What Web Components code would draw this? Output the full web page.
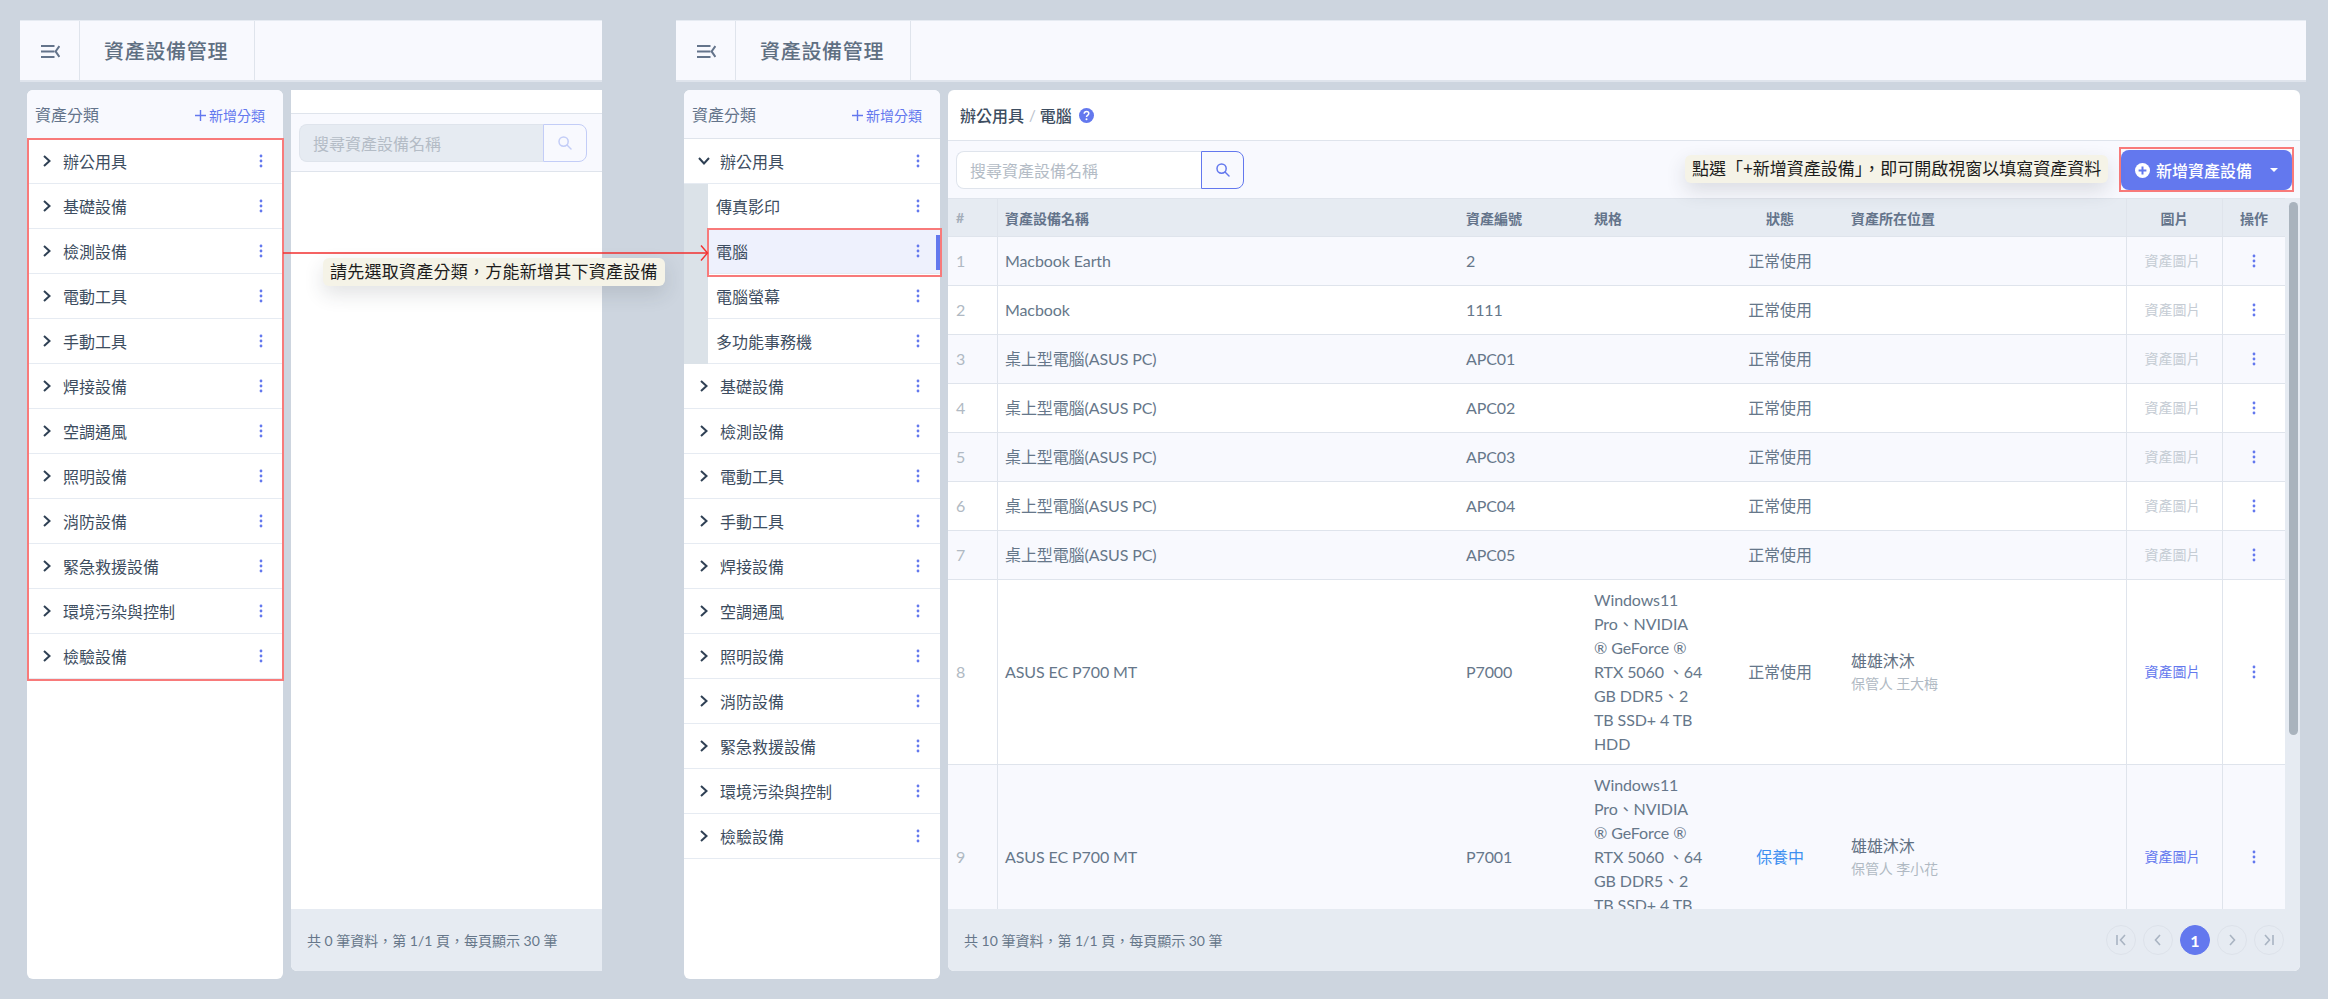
<!DOCTYPE html>
<html lang="zh-Hant">
<head>
<meta charset="utf-8">
<title>資產設備管理</title>
<style>
    html, body { margin: 0; height: 999px; overflow: hidden; background: #cdd5df; font-family: Lato, "Noto Sans CJK TC", sans-serif; }
    body { display: flex; gap: 74px; padding: 20px 0 0 20px; box-sizing: border-box; position: relative; }
</style>
</head>
<body>
    <asset-shell style="width:582px" inset-left="7" inset-right="0">
        <category-sidebar>
            <cat-row>辦公用具</cat-row>
            <cat-row>基礎設備</cat-row>
            <cat-row>檢測設備</cat-row>
            <cat-row>電動工具</cat-row>
            <cat-row>手動工具</cat-row>
            <cat-row>焊接設備</cat-row>
            <cat-row>空調通風</cat-row>
            <cat-row>照明設備</cat-row>
            <cat-row>消防設備</cat-row>
            <cat-row>緊急救援設備</cat-row>
            <cat-row>環境污染與控制</cat-row>
            <cat-row>檢驗設備</cat-row>
        </category-sidebar>
        <asset-panel empty total="0"></asset-panel>
    </asset-shell>

    <asset-shell style="width:1630px" inset-left="8" inset-right="6">
        <category-sidebar>
            <cat-row kind="open">辦公用具</cat-row>
            <cat-children>
                <cat-row kind="child">傳真影印</cat-row>
                <cat-row kind="child" active>電腦</cat-row>
                <cat-row kind="child">電腦螢幕</cat-row>
                <cat-row kind="child">多功能事務機</cat-row>
            </cat-children>
            <cat-row>基礎設備</cat-row>
            <cat-row>檢測設備</cat-row>
            <cat-row>電動工具</cat-row>
            <cat-row>手動工具</cat-row>
            <cat-row>焊接設備</cat-row>
            <cat-row>空調通風</cat-row>
            <cat-row>照明設備</cat-row>
            <cat-row>消防設備</cat-row>
            <cat-row>緊急救援設備</cat-row>
            <cat-row>環境污染與控制</cat-row>
            <cat-row>檢驗設備</cat-row>
        </category-sidebar>
        <asset-panel total="10"></asset-panel>
    </asset-shell>

    <!-- annotations drawn over the screens -->
    <mark-box x="27" y="138" w="257" h="543"></mark-box>
    <mark-box x="707" y="228" w="235" h="49"></mark-box>
    <mark-box x="2119" y="147" w="175" h="45"></mark-box>
    <note-arrow></note-arrow>
    <note-tip x="323" y="258">請先選取資產分類&#xFF0C;方能新增其下資產設備</note-tip>
    <note-tip x="1685" y="155" style="letter-spacing:0">點選「+新增資產設備」&#xFF0C;即可開啟視窗以填寫資產資料</note-tip>

<script>
const PRIMARY = '#6378ee';
const COMMA = '\uFF0C';

const ICONS = {
    search: '<svg width="14" height="14" viewBox="0 0 14 14" fill="none" stroke="currentColor" stroke-width="1.5" stroke-linecap="round"><circle cx="5.6" cy="5.6" r="4.6"/><path d="M9 9l4 4"/></svg>',
    toggle: '<svg width="19" height="14" viewBox="0 0 19 14" fill="none" stroke="#64748b" stroke-width="2"><path d="M0 2h13.5M0 7.4h13.5M0 13h13.5"/><path d="M18.4 2 14.6 7.4l3.8 5.4"/></svg>',
    dots: '<svg width="4" height="14" viewBox="0 0 4 14" fill="#6378ee"><circle cx="2" cy="2" r="1.4"/><circle cx="2" cy="7" r="1.4"/><circle cx="2" cy="12" r="1.4"/></svg>'
};

class AssetShell extends HTMLElement {
    connectedCallback() {
        this.attachShadow({ mode: 'open' });
        const left = this.getAttribute('inset-left');
        const right = this.getAttribute('inset-right');
        this.shadowRoot.innerHTML = `
            <style>
                :host { display: flex; flex-direction: column; flex: none; height: 959px; }
                header { display: flex; flex: none; height: 62px; box-sizing: border-box; background: #f8f9fe; border-top: 1px solid #e6ebf2; border-bottom: 2px solid #dfe4ec; }
                .toggle { width: 60px; box-sizing: border-box; display: flex; align-items: center; justify-content: center; border-right: 1px solid #dfe4ec; padding-left: 1px; }
                h1 { margin: 0; padding: 0 26px 0 24px; display: flex; align-items: center; font-size: 20px; font-weight: 500; letter-spacing: .7px; color: #5f6f82; border-right: 1px solid #dfe4ec; }
                .body { display: flex; flex: 1; gap: 8px; padding: 8px ${right}px 0 ${left}px; min-height: 0; }
            </style>
            <header>
                <div class="toggle">${ICONS.toggle}</div>
                <h1>資產設備管理</h1>
            </header>
            <div class="body"><slot></slot></div>
        `;
    }
}

class CategorySidebar extends HTMLElement {
    connectedCallback() {
        this.attachShadow({ mode: 'open' });
        this.shadowRoot.innerHTML = `
            <style>
                :host { display: flex; flex-direction: column; flex: none; width: 256px; height: 889px; background: #fff; border-radius: 6px; overflow: hidden; }
                .head { flex: none; height: 49px; box-sizing: border-box; display: flex; align-items: center; justify-content: space-between; padding: 2px 18px 0 8px; background: #f8f9fe; border-bottom: 1px solid #dfe4ec; }
                .title { font-size: 16px; color: #64748b; margin-top: -3px; }
                .add { display: flex; align-items: center; gap: 3px; font-size: 14px; color: ${PRIMARY}; }
            </style>
            <div class="head">
                <span class="title">資產分類</span>
                <span class="add"><svg width="11" height="11" viewBox="0 0 11 11" stroke="#6378ee" stroke-width="1.4"><path d="M5.5 0v11M0 5.5h11"/></svg>新增分類</span>
            </div>
            <slot></slot>
        `;
    }
}

class CatChildren extends HTMLElement {
    connectedCallback() {
        this.attachShadow({ mode: 'open' });
        this.shadowRoot.innerHTML = `
            <style>
                :host { display: block; padding-left: 24px; background: #dbe2e8; }
            </style>
            <slot></slot>
        `;
    }
}

class CatRow extends HTMLElement {
    connectedCallback() {
        this.attachShadow({ mode: 'open' });
        const kind = this.getAttribute('kind');
        let arrow = '<svg class="arrow" width="8" height="12" viewBox="0 0 8 12" fill="none" stroke="#2f4054" stroke-width="2"><path d="M1 1l5.5 5L1 11"/></svg>';
        if (kind === 'open') arrow = '<svg class="arrow" width="12" height="8" viewBox="0 0 12 8" fill="none" stroke="#2f4054" stroke-width="2"><path d="M1 1l5 5.5L11 1"/></svg>';
        if (kind === 'child') arrow = '';
        this.shadowRoot.innerHTML = `
            <style>
                :host { display: flex; align-items: center; flex: none; height: 45px; box-sizing: border-box; padding: 0 20px 1px 16px; background: #fff; border-bottom: 1px solid #e6ebf2; font-size: 16px; color: #3d4d60; position: relative; }
                :host([kind="open"]) { padding-left: 14px; }
                :host([kind="child"]) { padding-left: 8px; }
                :host([active]) { background: #eef1fd; }
                :host([active]) .bar { position: absolute; right: 0; top: 6px; width: 4px; height: 35px; background: ${PRIMARY}; }
                .arrow { flex: none; margin-right: 12px; }
                :host([kind="open"]) .arrow { margin-right: 10px; }
                .label { flex: 1; }
            </style>
            ${arrow}
            <span class="label"><slot></slot></span>
            ${ICONS.dots}
            <span class="bar"></span>
        `;
    }
}

class SearchBox extends HTMLElement {
    connectedCallback() {
        this.attachShadow({ mode: 'open' });
        this.shadowRoot.innerHTML = `
            <style>
                :host { display: flex; flex: none; width: 288px; height: 38px; box-sizing: border-box; font-size: 16px; }
                .field { flex: 1; display: flex; align-items: center; padding-left: 13px; background: #fff; border: 1px solid #dfe4ec; border-right: 0; border-radius: 8px 0 0 8px; color: #b4bcc6; }
                .btn { flex: none; width: 43px; box-sizing: border-box; display: flex; align-items: center; justify-content: center; border: 1px solid ${PRIMARY}; border-radius: 0 8px 8px 0; color: ${PRIMARY}; }
                :host([disabled]) .field { background: #e6ebf2; border-color: #dfe4ec; color: #b4bcc6; }
                :host([disabled]) .btn { width: 44px; border-color: #c3cdf7; color: #c3cdf7; }
            </style>
            <div class="field">搜尋資產設備名稱</div>
            <div class="btn">${ICONS.search}</div>
        `;
    }
}

class AddButton extends HTMLElement {
    connectedCallback() {
        this.attachShadow({ mode: 'open' });
        this.shadowRoot.innerHTML = `
            <style>
                :host { display: flex; align-items: center; flex: none; width: 171px; height: 40px; box-sizing: border-box; padding: 0 14px; gap: 6px; background: ${PRIMARY}; border-radius: 8px; color: #fff; font-size: 16px; font-weight: 500; }
                .caret { margin-left: auto; width: 0; height: 0; border: 4px solid transparent; border-top: 4px solid #fff; border-bottom: 0; }
            </style>
            <svg width="15" height="15" viewBox="0 0 15 15"><circle cx="7.5" cy="7.5" r="7.5" fill="#fff"/><path d="M7.5 3.6v7.8M3.6 7.5h7.8" stroke="#6378ee" stroke-width="2"/></svg>
            <span>新增資產設備</span>
            <span class="caret"></span>
        `;
    }
}

const SPEC = 'Windows11<br>Pro、NVIDIA<br>® GeForce ®<br>RTX 5060 、64<br>GB DDR5、2<br>TB SSD+ 4 TB<br>HDD';

const ROWS = [
    { name: 'Macbook Earth', code: '2' },
    { name: 'Macbook', code: '1111' },
    { name: '桌上型電腦(ASUS PC)', code: 'APC01' },
    { name: '桌上型電腦(ASUS PC)', code: 'APC02' },
    { name: '桌上型電腦(ASUS PC)', code: 'APC03' },
    { name: '桌上型電腦(ASUS PC)', code: 'APC04' },
    { name: '桌上型電腦(ASUS PC)', code: 'APC05' },
    { name: 'ASUS EC P700 MT', code: 'P7000', spec: SPEC, place: '雄雄沐沐', keeper: '保管人 王大梅' },
    { name: 'ASUS EC P700 MT', code: 'P7001', spec: SPEC, place: '雄雄沐沐', keeper: '保管人 李小花', status: '保養中' }
];

class AssetTable extends HTMLElement {
    connectedCallback() {
        this.attachShadow({ mode: 'open' });
        const body = ROWS.map((r, i) => `
            <tr>
                <td class="num">${i + 1}</td>
                <td class="split">${r.name}</td>
                <td>${r.code}</td>
                <td class="spec">${r.spec || ''}</td>
                <td class="center ${r.status ? 'busy' : ''}">${r.status || '正常使用'}</td>
                <td>${r.place ? `<div class="place">${r.place}</div><div class="keeper">${r.keeper}</div>` : ''}</td>
                <td class="center split pic ${r.place ? 'link' : ''}">資產圖片</td>
                <td class="center split act">${ICONS.dots}</td>
            </tr>`).join('');
        this.shadowRoot.innerHTML = `
            <style>
                :host { display: flex; flex: 1; min-height: 0; overflow: hidden; background: #e6ebf2; }
                .scroll { flex: 1; min-width: 0; overflow: hidden; background: #fff; }
                table { width: 1337px; table-layout: fixed; border-collapse: separate; border-spacing: 0; font-size: 16px; letter-spacing: -.1px; color: #66778a; }
                th { height: 39px; box-sizing: border-box; background: #e6ebf2; border-top: 1px solid #dfe4ec; border-bottom: 1px solid #dfe4ec; padding: 0 7px; text-align: left; font-size: 14px; font-weight: 700; letter-spacing: 0; color: #64748b; }
                th.num { color: #a3adb9; padding-left: 8px; }
                td { height: 49px; box-sizing: border-box; padding: 8px 7px; line-height: 24px; border-bottom: 1px solid #dfe4ec; vertical-align: middle; }
                tr:nth-child(odd) td { background: #f8f9fe; }
                td.num { color: #b0b9c3; padding-left: 8px; }
                .split { border-left: 1px solid #dfe4ec; }
                .center, th.center { text-align: center; padding-left: 0; padding-right: 0; }
                td.spec { padding-right: 0; }
                td.pic { font-size: 14px; letter-spacing: 0; color: #c5ccd4; padding-right: 4px; }
                td.link { color: ${PRIMARY}; }
                td.act { padding-right: 1px; }
                .busy { color: #3d8ff0; }
                .place { line-height: 22px; color: #5f6f82; margin-top: 1px; }
                .keeper { font-size: 14px; line-height: 24px; color: #b0b9c3; }
                svg { vertical-align: -1px; }
                .gutter { flex: none; width: 15px; padding: 4px 2px 0 4px; box-sizing: border-box; }
                .thumb { width: 9px; height: 533px; border-radius: 5px; background: #a9b3bd; }
            </style>
            <div class="scroll">
                <table>
                    <colgroup>
                        <col style="width:49px"><col style="width:462px"><col style="width:128px"><col style="width:129px">
                        <col style="width:128px"><col style="width:282px"><col style="width:96px"><col style="width:63px">
                    </colgroup>
                    <thead>
                        <tr>
                            <th class="num">#</th>
                            <th class="split">資產設備名稱</th>
                            <th>資產編號</th>
                            <th>規格</th>
                            <th class="center">狀態</th>
                            <th>資產所在位置</th>
                            <th class="center split">圖片</th>
                            <th class="center split">操作</th>
                        </tr>
                    </thead>
                    <tbody>${body}</tbody>
                </table>
            </div>
            <div class="gutter"><div class="thumb"></div></div>
        `;
    }
}

class PagerBar extends HTMLElement {
    connectedCallback() {
        this.attachShadow({ mode: 'open' });
        const total = this.getAttribute('total');
        const chev = (d) => `<svg width="14" height="14" viewBox="0 0 14 14" fill="none" stroke="#a9b4c2" stroke-width="1.6">${d}</svg>`;
        const pages = this.hasAttribute('pages') ? `
            <div class="pages">
                <span>${chev('<path d="M3 2v10M11 2 6.5 7l4.5 5"/>')}</span>
                <span>${chev('<path d="M9 2 4.5 7 9 12"/>')}</span>
                <span class="on">1</span>
                <span>${chev('<path d="M5 2l4.5 5L5 12"/>')}</span>
                <span>${chev('<path d="M3 2l4.5 5L3 12M11 2v10"/>')}</span>
            </div>` : '';
        this.shadowRoot.innerHTML = `
            <style>
                :host { display: flex; align-items: center; justify-content: space-between; flex: none; height: 62px; box-sizing: border-box; padding: 0 16px; background: #e6ebf2; font-size: 14px; color: #66778a; }
                .pages { display: flex; gap: 7px; }
                .pages span { width: 30px; height: 30px; box-sizing: border-box; display: flex; align-items: center; justify-content: center; border: 1px solid #dde2ea; border-radius: 50%; }
                .pages .on { background: ${PRIMARY}; border-color: ${PRIMARY}; color: #fff; font-size: 16px; font-weight: 700; }
            </style>
            <span>共 ${total} 筆資料${COMMA}第 1/1 頁${COMMA}每頁顯示 30 筆</span>
            ${pages}
        `;
    }
}

class AssetPanel extends HTMLElement {
    connectedCallback() {
        this.attachShadow({ mode: 'open' });
        const empty = this.hasAttribute('empty');
        const total = this.getAttribute('total');
        const crumb = empty ? '' : `
            <span class="c1">辦公用具</span><span class="sep">/</span><span class="c1">電腦</span>
            <svg width="15" height="15" viewBox="0 0 15 15"><circle cx="7.5" cy="7.5" r="7.5" fill="#6378ee"/><path d="M5.2 5.7c0-1.3 1-2.2 2.3-2.2s2.3.8 2.3 2c0 1.8-2.3 1.8-2.3 3.4" fill="none" stroke="#fff" stroke-width="1.5"/><circle cx="7.5" cy="11.2" r="1" fill="#fff"/></svg>`;
        this.shadowRoot.innerHTML = `
            <style>
                :host { display: flex; flex-direction: column; flex: 1; min-width: 0; height: 881px; background: #fff; border-radius: 6px; overflow: hidden; }
                :host([empty]) { border-radius: 0 0 0 6px; }
                .crumb { flex: none; height: 51px; box-sizing: border-box; display: flex; align-items: center; padding: 0 0 0 12px; border-bottom: 1px solid #dfe4ec; font-size: 16px; color: #3d4d60; font-weight: 500; }
                :host([empty]) .crumb { height: 24px; }
                .sep { color: #b8c0ca; font-size: 15px; margin: 0 4px 0 5px; font-weight: 400; }
                .crumb svg { margin-left: 7px; }
                .bar { flex: none; height: 57px; box-sizing: border-box; display: flex; align-items: center; justify-content: space-between; padding: 1px 8px 0 8px; background: #f8f9fe; }
                :host([empty]) .bar { height: 58px; border-bottom: 1px solid #dfe4ec; }
                .blank { flex: 1; }
            </style>
            <div class="crumb">${crumb}</div>
            <div class="bar">
                <search-box ${empty ? 'disabled' : ''}></search-box>
                ${empty ? '' : '<add-button></add-button>'}
            </div>
            ${empty ? '<div class="blank"></div>' : '<asset-table></asset-table>'}
            <pager-bar total="${total}" ${empty ? '' : 'pages'}></pager-bar>
        `;
    }
}

class MarkBox extends HTMLElement {
    connectedCallback() {
        this.attachShadow({ mode: 'open' });
        const get = (n) => this.getAttribute(n);
        this.shadowRoot.innerHTML = `
            <style>
                :host { display: block; position: absolute; left: ${get('x')}px; top: ${get('y')}px; width: ${get('w')}px; height: ${get('h')}px; box-sizing: border-box; border: 2px solid #f87a7a; pointer-events: none; }
            </style>
        `;
    }
}

class NoteArrow extends HTMLElement {
    connectedCallback() {
        this.attachShadow({ mode: 'open' });
        this.shadowRoot.innerHTML = `
            <style>
                :host { display: block; position: absolute; left: 283px; top: 244px; width: 427px; height: 18px; }
                svg { display: block; }
            </style>
            <svg width="427" height="18" viewBox="0 0 427 18" fill="none" stroke="#f22f2f" stroke-width="1.4">
                <path d="M0 9h424"/>
                <path d="M418 1.5 424.5 9 418 16.5"/>
            </svg>
        `;
    }
}

class NoteTip extends HTMLElement {
    connectedCallback() {
        this.attachShadow({ mode: 'open' });
        this.shadowRoot.innerHTML = `
            <style>
                :host { display: block; position: absolute; left: ${this.getAttribute('x')}px; top: ${this.getAttribute('y')}px; height: 28px; box-sizing: border-box; padding: 0 7px; background: #f5f3e7; border-radius: 6px; box-shadow: 0 8px 20px rgba(40, 50, 60, 0.14); font-size: 17px; line-height: 28px; color: #1c1c1c; white-space: nowrap; letter-spacing: .25px; }
            </style>
            <slot></slot>
        `;
    }
}

customElements.define('asset-shell', AssetShell);
customElements.define('category-sidebar', CategorySidebar);
customElements.define('cat-children', CatChildren);
customElements.define('cat-row', CatRow);
customElements.define('search-box', SearchBox);
customElements.define('add-button', AddButton);
customElements.define('asset-table', AssetTable);
customElements.define('pager-bar', PagerBar);
customElements.define('asset-panel', AssetPanel);
customElements.define('mark-box', MarkBox);
customElements.define('note-arrow', NoteArrow);
customElements.define('note-tip', NoteTip);
</script>
</body>
</html>
